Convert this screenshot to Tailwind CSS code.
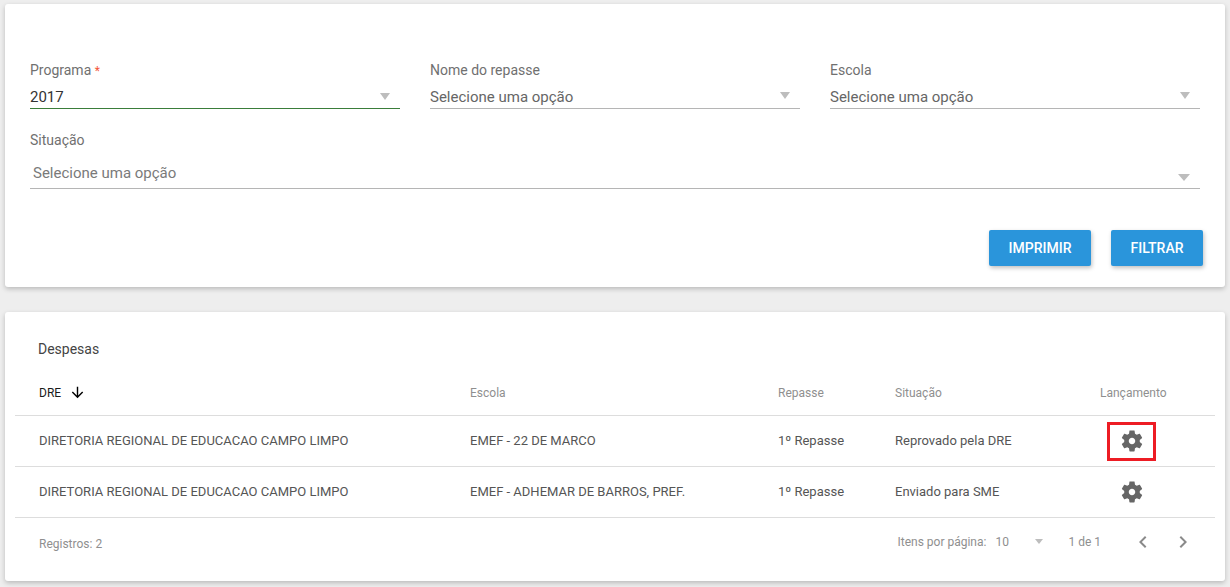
<!DOCTYPE html>
<html lang="pt-BR">
<head>
    <meta charset="UTF-8">
    <title>Despesas</title>
    <script src="https://cdn.jsdelivr.net/npm/@tailwindcss/browser@4"></script>
</head>
<body class="bg-[#eeeeee] font-['Roboto',sans-serif] overflow-hidden">
    <div class="w-[1230px] h-[587px] px-[5px] pt-[4px]">

        <!-- Filtros -->
        <section class="h-[283px] bg-white rounded-[3px] shadow-[0_2px_5px_rgba(0,0,0,0.22)] px-[25px] pt-[57px]">
            <div class="grid grid-cols-3 gap-x-[30px] w-[1170px]">
                <div class="h-[48px] border-b border-[#3a7d3a]">
                    <label class="block text-[14px] leading-[18px] text-[#707070]">Programa <span class="text-[12px] text-[#f4573a]">*</span></label>
                    <div class="flex items-center justify-between mt-[7px] text-[15px] leading-[20px] text-[#333333]">
                        <span>2017</span>
                        <span class="mr-[10px] mb-[2px] border-x-[5px] border-t-[7px] border-x-transparent border-t-[#bdbdbd]"></span>
                    </div>
                </div>
                <div class="h-[48px] border-b border-[#b5b5b5]">
                    <label class="block text-[14px] leading-[18px] text-[#707070]">Nome do repasse</label>
                    <div class="flex items-center justify-between mt-[8px] text-[15px] leading-[20px] text-[#666666]">
                        <span>Selecione uma opção</span>
                        <span class="mr-[10px] mb-[3px] border-x-[5px] border-t-[7px] border-x-transparent border-t-[#bdbdbd]"></span>
                    </div>
                </div>
                <div class="h-[48px] border-b border-[#b5b5b5]">
                    <label class="block text-[14px] leading-[18px] text-[#707070]">Escola</label>
                    <div class="flex items-center justify-between mt-[8px] text-[15px] leading-[20px] text-[#666666]">
                        <span>Selecione uma opção</span>
                        <span class="mr-[10px] mb-[3px] border-x-[5px] border-t-[7px] border-x-transparent border-t-[#bdbdbd]"></span>
                    </div>
                </div>
                <div class="col-span-3 h-[58px] mt-[22px] border-b border-[#b5b5b5]">
                    <label class="block text-[14px] leading-[18px] text-[#707070]">Situação</label>
                    <div class="flex items-center justify-between mt-[14px] pl-[3px] text-[15px] leading-[20px] text-[#7a7a7a]">
                        <span>Selecione uma opção</span>
                        <span class="mr-[10px] mt-[8px] border-x-[6px] border-t-[7px] border-x-transparent border-t-[#bdbdbd]"></span>
                    </div>
                </div>
            </div>
            <div class="flex justify-end gap-[20px] mt-[41px] w-[1173px]">
                <button class="w-[102px] h-[36px] rounded-[2px] bg-[#2a95db] text-white text-[14px] font-medium shadow-[1px_2px_4px_rgba(0,0,0,0.25)]">IMPRIMIR</button>
                <button class="w-[92px] h-[36px] rounded-[2px] bg-[#2a95db] text-white text-[14px] font-medium shadow-[1px_2px_4px_rgba(0,0,0,0.25)]">FILTRAR</button>
            </div>
        </section>

        <!-- Despesas -->
        <section class="h-[269px] mt-[25px] bg-white rounded-[3px] shadow-[0_2px_5px_rgba(0,0,0,0.22)] px-[10px]">
            <h2 class="pt-[28px] pl-[23px] text-[14px] leading-[18px] text-[#444444]">Despesas</h2>

            <div class="grid grid-cols-[431px_308px_117px_205px_1fr] items-center h-[58px] pl-[24px] pt-[12px] border-b border-[#dddddd] text-[12px] text-[#8f8f8f]">
                <div class="flex items-center gap-[8px] text-[#1a1a1a]">
                    DRE
                    <svg class="w-[17px] h-[17px]" viewBox="0 0 24 24" fill="#000000"><path d="M20 12l-1.41-1.41L13 16.17V4h-2v12.17l-5.58-5.59L4 12l8 8 8-8z"/></svg>
                </div>
                <div>Escola</div>
                <div>Repasse</div>
                <div>Situação</div>
                <div>Lançamento</div>
            </div>

            <div class="grid grid-cols-[431px_308px_117px_212px_1fr] items-center h-[51px] pl-[24px] border-b border-[#dddddd] text-[13px] text-[#555555]">
                <div>DIRETORIA REGIONAL DE EDUCACAO CAMPO LIMPO</div>
                <div>EMEF - 22 DE MARCO</div>
                <div>1º Repasse</div>
                <div>Reprovado pela DRE</div>
                <div class="flex items-center justify-center w-[49px] h-[39px] pl-[1px] border-[3px] border-[#ed1c24]">
                    <svg class="w-[26px] h-[26px]" viewBox="0 0 24 24" fill="#666666"><path d="M19.14 12.94c.04-.3.06-.61.06-.94 0-.32-.02-.64-.07-.94l2.03-1.58c.18-.14.23-.41.12-.61l-1.92-3.32c-.12-.22-.37-.29-.59-.22l-2.39.96c-.5-.38-1.03-.7-1.62-.94l-.36-2.54c-.04-.24-.24-.41-.48-.41h-3.84c-.24 0-.43.17-.47.41l-.36 2.54c-.59.24-1.13.57-1.62.94l-2.39-.96c-.22-.08-.47 0-.59.22L2.74 8.87c-.12.21-.08.47.12.61l2.03 1.58c-.05.3-.09.63-.09.94s.02.64.07.94l-2.03 1.58c-.18.14-.23.41-.12.61l1.92 3.32c.12.22.37.29.59.22l2.39-.96c.5.38 1.03.7 1.62.94l.36 2.54c.05.24.24.41.48.41h3.84c.24 0 .44-.17.47-.41l.36-2.54c.59-.24 1.13-.56 1.62-.94l2.39.96c.22.08.47 0 .59-.22l1.92-3.32c.12-.22.07-.47-.12-.61l-2.01-1.58zM12 15c-1.65 0-3-1.35-3-3s1.35-3 3-3 3 1.35 3 3-1.35 3-3 3z"/></svg>
                </div>
            </div>

            <div class="grid grid-cols-[431px_308px_117px_212px_1fr] items-center h-[51px] pl-[24px] border-b border-[#dddddd] text-[13px] text-[#555555]">
                <div>DIRETORIA REGIONAL DE EDUCACAO CAMPO LIMPO</div>
                <div>EMEF - ADHEMAR DE BARROS, PREF.</div>
                <div>1º Repasse</div>
                <div>Enviado para SME</div>
                <div class="flex items-center justify-center w-[49px] h-[39px] pl-[1px]">
                    <svg class="w-[26px] h-[26px]" viewBox="0 0 24 24" fill="#666666"><path d="M19.14 12.94c.04-.3.06-.61.06-.94 0-.32-.02-.64-.07-.94l2.03-1.58c.18-.14.23-.41.12-.61l-1.92-3.32c-.12-.22-.37-.29-.59-.22l-2.39.96c-.5-.38-1.03-.7-1.62-.94l-.36-2.54c-.04-.24-.24-.41-.48-.41h-3.84c-.24 0-.43.17-.47.41l-.36 2.54c-.59.24-1.13.57-1.62.94l-2.39-.96c-.22-.08-.47 0-.59.22L2.74 8.87c-.12.21-.08.47.12.61l2.03 1.58c-.05.3-.09.63-.09.94s.02.64.07.94l-2.03 1.58c-.18.14-.23.41-.12.61l1.92 3.32c.12.22.37.29.59.22l2.39-.96c.5.38 1.03.7 1.62.94l.36 2.54c.05.24.24.41.48.41h3.84c.24 0 .44-.17.47-.41l.36-2.54c.59-.24 1.13-.56 1.62-.94l2.39.96c.22.08.47 0 .59-.22l1.92-3.32c.12-.22.07-.47-.12-.61l-2.01-1.58zM12 15c-1.65 0-3-1.35-3-3s1.35-3 3-3 3 1.35 3 3-1.35 3-3 3z"/></svg>
                </div>
            </div>

            <div class="flex items-center h-[52px] pl-[24px] text-[12px] text-[#8f8f8f]">
                <span>Registros: 2</span>
                <div class="ml-auto flex items-center mb-[5px]">
                    <span>Itens por página:</span>
                    <span class="ml-[9px] w-[40px]">10</span>
                    <span class="border-x-[4px] border-t-[5px] border-x-transparent border-t-[#bdbdbd]"></span>
                    <span class="ml-[25px]">1 de 1</span>
                    <svg class="ml-[30px] w-[24px] h-[24px]" viewBox="0 0 24 24" fill="#8a8a8a"><path d="M15.41 7.41L14 6l-6 6 6 6 1.41-1.41L10.83 12z"/></svg>
                    <svg class="ml-[16px] mr-[20px] w-[24px] h-[24px]" viewBox="0 0 24 24" fill="#8a8a8a"><path d="M8.59 16.59L10 18l6-6-6-6-1.41 1.41L13.17 12z"/></svg>
                </div>
            </div>
        </section>
    </div>
</body>
</html>
